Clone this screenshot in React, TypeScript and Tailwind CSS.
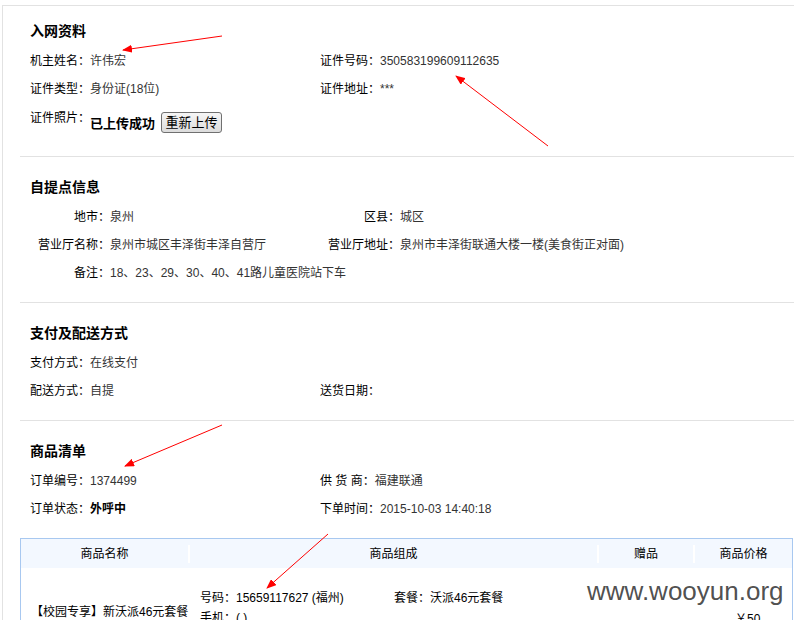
import React from 'react';

const font = "font-['Liberation_Sans','Noto_Sans_CJK_SC',sans-serif]";

const Row = ({ label, value, right, rightValue, center }: { label: string; value?: React.ReactNode; right?: string; rightValue?: React.ReactNode; center?: boolean }) => (
  <div className="flex h-[28px] items-center text-[12px]">
    <div className="flex w-[290px] items-center">
      <span className={center ? 'w-[80px] text-right text-black' : 'text-black'}>{label}</span>
      <span className="text-[#333]">{value}</span>
    </div>
    {right !== undefined && (
      <div className="flex items-center">
        <span className={center ? 'w-[80px] text-right text-black' : 'text-black'}>{right}</span>
        <span className="text-[#333]">{rightValue}</span>
      </div>
    )}
  </div>
);

const Title = ({ children }: { children: React.ReactNode }) => (
  <h3 className="mb-[6px] h-[20px] text-[14px] font-bold leading-[20px] text-black">{children}</h3>
);

const Arrows = () => (
  <svg className="pointer-events-none absolute left-0 top-0" width="794" height="620">
    <defs>
      <marker id="head" markerWidth="10" markerHeight="8" refX="9" refY="4" orient="auto" markerUnits="userSpaceOnUse">
        <path d="M0,0 L10,4 L0,8 Z" fill="#ff0000" />
      </marker>
    </defs>
    <g stroke="#ff0000" strokeWidth="1">
      <line x1="222" y1="36" x2="123" y2="50" markerEnd="url(#head)" />
      <line x1="548" y1="146" x2="456" y2="76" markerEnd="url(#head)" />
      <line x1="222" y1="425" x2="125" y2="466" markerEnd="url(#head)" />
      <line x1="328" y1="534" x2="267" y2="588" markerEnd="url(#head)" />
    </g>
  </svg>
);

export default function App() {
  return (
    <div className={`relative h-[620px] w-[794px] overflow-hidden bg-white ${font}`}>
      <div className="ml-[2px] mt-[5px] border-l border-t border-[#e2e2e2]">
        <div className="pl-[17px]">
          {/* 入网资料 */}
          <section className="border-b border-[#e2e2e2] pb-[15px] pl-[10px] pt-[15px]">
            <Title>入网资料</Title>
            <Row label="机主姓名：" value="许伟宏" right="证件号码：" rightValue="350583199609112635" />
            <Row label="证件类型：" value="身份证(18位)" right="证件地址：" rightValue="***" />
            <div className="flex h-[38px] items-start pt-[6px] text-[12px]">
              <span className="text-black">证件照片：</span>
              <span className="mt-[5px] text-[13px] font-bold text-black">已上传成功</span>
              <button className="ml-[6px] mt-[3px] h-[21px] w-[61px] rounded-[3px] border border-[#707070] bg-gradient-to-b from-[#f6f6f6] to-[#dcdcdc] text-[13px] leading-[19px] text-black">
                重新上传
              </button>
            </div>
          </section>

          {/* 自提点信息 */}
          <section className="border-b border-[#e2e2e2] pb-[15px] pl-[10px] pt-[20px]">
            <Title>自提点信息</Title>
            <Row center label="地市：" value="泉州" right="区县：" rightValue="城区" />
            <Row center label="营业厅名称：" value="泉州市城区丰泽街丰泽自营厅" right="营业厅地址：" rightValue="泉州市丰泽街联通大楼一楼(美食街正对面)" />
            <div className="flex h-[28px] items-center text-[12px]">
              <span className="w-[80px] text-right text-black">备注：</span>
              <span className="text-[#333]">18、23、29、30、40、41路儿童医院站下车</span>
            </div>
          </section>

          {/* 支付及配送方式 */}
          <section className="border-b border-[#e2e2e2] pb-[15px] pl-[10px] pt-[20px]">
            <Title>支付及配送方式</Title>
            <Row label="支付方式：" value="在线支付" />
            <Row label="配送方式：" value="自提" right="送货日期：" rightValue="" />
          </section>

          {/* 商品清单 */}
          <section className="pl-[10px] pt-[20px]">
            <Title>商品清单</Title>
            <Row label="订单编号：" value="1374499" right=" 供 货 商：" rightValue="福建联通" />
            <Row label="订单状态：" value={<b className="text-black">外呼中</b>} right="下单时间：" rightValue="2015-10-03 14:40:18" />
          </section>

          <div className="mt-[15px] w-[773px] border border-[#a8c8f0] text-[12px]">
            <div className="flex h-[29px] items-center bg-[#f3f8ff] text-black">
              <div className="w-[169px] border-r-2 border-white text-center">商品名称</div>
              <div className="w-[409px] border-r-2 border-white text-center">商品组成</div>
              <div className="w-[96px] border-r-2 border-white text-center">赠品</div>
              <div className="flex-1 text-center">商品价格</div>
            </div>
            <div className="flex h-[80px] text-black">
              <div className="flex w-[169px] items-center pb-[2px] pl-[10px] pt-[10px]">【校园专享】新沃派46元套餐</div>
              <div className="w-[409px] pl-[10px] pt-[21px]">
                <div className="flex h-[18px] items-center">
                  <span className="w-[194px]">号码：15659117627 (福州)</span>
                  <span>套餐：沃派46元套餐</span>
                </div>
                <div className="flex h-[22px] items-center">手机：( )</div>
              </div>
              <div className="w-[96px]" />
              <div className="flex-1 pl-[40px] pt-[42px]">￥50</div>
            </div>
          </div>
        </div>
      </div>

      <div className="absolute left-[587px] top-[575px] font-['Liberation_Sans',sans-serif] text-[26px] leading-[32px] text-[#3a3a3a]/90">
        www.wooyun.org
      </div>
      <Arrows />
    </div>
  );
}
